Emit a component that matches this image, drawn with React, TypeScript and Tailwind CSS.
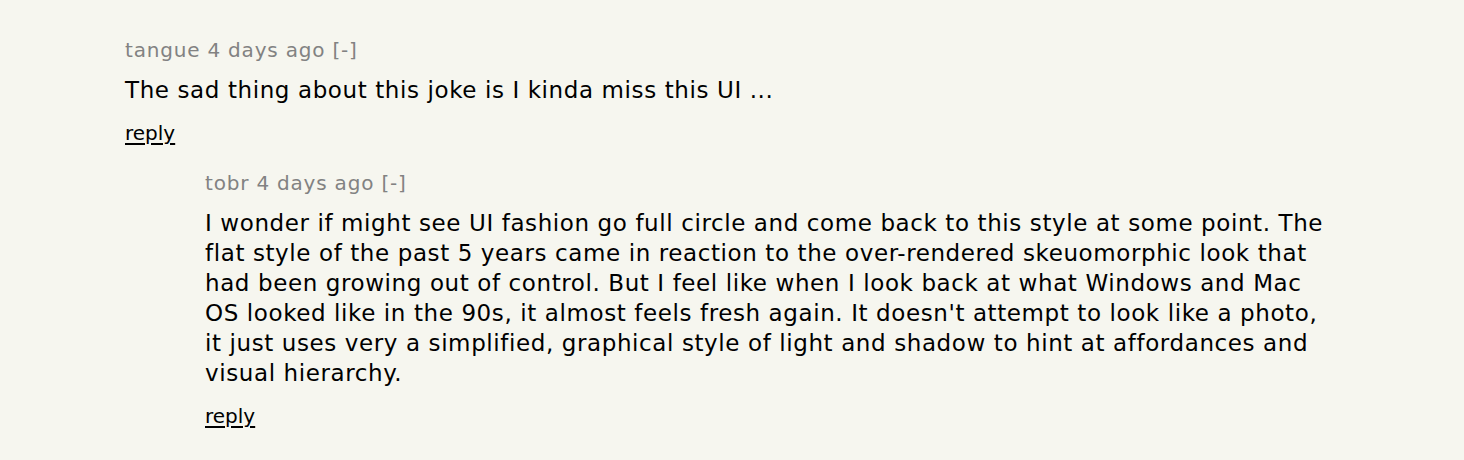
import React from 'react';

type Comment = {
  user: string;
  age: string;
  lines: string[];
  indent: number;
};

const comments: Comment[] = [
  {
    user: 'tangue',
    age: '4 days ago',
    lines: ['The sad thing about this joke is I kinda miss this UI ...'],
    indent: 0,
  },
  {
    user: 'tobr',
    age: '4 days ago',
    lines: [
      'I wonder if might see UI fashion go full circle and come back to this style at some point. The',
      'flat style of the past 5 years came in reaction to the over-rendered skeuomorphic look that',
      'had been growing out of control. But I feel like when I look back at what Windows and Mac',
      "OS looked like in the 90s, it almost feels fresh again. It doesn't attempt to look like a photo,",
      'it just uses very a simplified, graphical style of light and shadow to hint at affordances and',
      'visual hierarchy.',
    ],
    indent: 1,
  },
];

function CommentRow({ c }: { c: Comment }) {
  return (
    <div className={c.indent ? 'pl-[80px]' : ''}>
      <div className="text-[20px] leading-[24px] tracking-[0.8px] text-[#828282]">
        <a href="#">{c.user}</a> <a href="#">{c.age}</a> <span>[-]</span>
      </div>
      <div className="mt-[13px] text-[23px] leading-[30px] tracking-[0.6px] text-black whitespace-nowrap">
        {c.lines.map((l, i) => (
          <div key={i}>{l}</div>
        ))}
      </div>
      <div className="mt-[16px] text-[20px] leading-[24px]">
        <a href="#" className="text-black underline decoration-2 underline-offset-[3px]">reply</a>
      </div>
    </div>
  );
}

export default function App() {
  return (
    <div
      className="min-h-[460px] w-full bg-[#f6f6ef] pl-[125px] pt-[38px]"
      style={{ fontFamily: '"DejaVu Sans", Verdana, sans-serif' }}
    >
      <div className="flex flex-col gap-[26px]">
        {comments.map((c) => (
          <CommentRow key={c.user} c={c} />
        ))}
      </div>
    </div>
  );
}
